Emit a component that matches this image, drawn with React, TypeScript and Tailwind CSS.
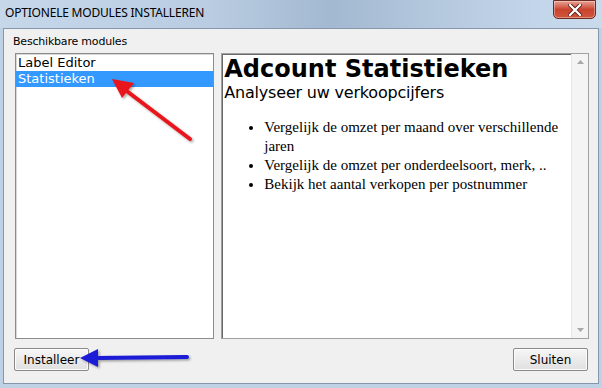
import React from 'react';

const items = ['Label Editor', 'Statistieken'];
const features = [
  'Vergelijk de omzet per maand over verschillende jaren',
  'Vergelijk de omzet per onderdeelsoort, merk, ..',
  'Bekijk het aantal verkopen per postnummer',
];

const CloseButton = () => (
  <div className="w-[43px] h-[19px] rounded-b-[5px] border border-[#6b2a22] bg-gradient-to-b from-[#e8a193] via-[#c9432f] to-[#d0563c] flex items-center justify-center shadow-[inset_0_0_0_1px_rgba(255,255,255,0.35)]">
    <svg width="14" height="12" viewBox="0 0 14 12">
      <path d="M2 1 L12 11 M12 1 L2 11" stroke="#5a1d16" strokeWidth="4" strokeLinecap="square" />
      <path d="M2 1 L12 11 M12 1 L2 11" stroke="#ffffff" strokeWidth="2.2" strokeLinecap="square" />
    </svg>
  </div>
);

const WinButton = ({ label }: { label: string }) => (
  <button className="w-[75px] h-[23px] border border-[#8a8a8a] rounded-[2px] bg-gradient-to-b from-[#f6f6f6] to-[#e0e0e0] text-[12px] text-black font-['DejaVu_Sans',sans-serif] shadow-[inset_0_0_0_1px_#fcfcfc]">
    {label}
  </button>
);

const Arrows = () => (
  <svg className="absolute inset-0 pointer-events-none" width="602" height="388">
    <defs>
      <filter id="sh" x="-20%" y="-20%" width="140%" height="140%">
        <feDropShadow dx="1.5" dy="1.5" stdDeviation="1.2" floodColor="#000" floodOpacity="0.35" />
      </filter>
    </defs>
    <g filter="url(#sh)">
      <line x1="190" y1="139" x2="124" y2="89" stroke="#e8161b" strokeWidth="4" strokeLinecap="round" />
      <polygon points="112,79 134,83 122,98" fill="#e8161b" />
      <line x1="187" y1="357" x2="95" y2="358" stroke="#1a1ad6" strokeWidth="4" strokeLinecap="round" />
      <polygon points="80,358 98,349 98,367" fill="#1a1ad6" />
    </g>
  </svg>
);

export default function App() {
  return (
    <div className="relative w-[602px] h-[388px] bg-[#bfd1e5] flex flex-col overflow-hidden">
      {/* title bar */}
      <div className="h-[28px] shrink-0 flex items-start justify-between bg-[linear-gradient(to_right,#c6d7ea_0%,#b9cce1_35%,#a3b9d1_55%,#b2c6dc_70%,#c4d6ea_90%,#c9daec_100%)]">
        <span className="pl-[5px] pt-[4px] text-[12px] text-black tracking-[-0.2px] font-['Noto_Sans',sans-serif]">
          OPTIONELE MODULES INSTALLEREN
        </span>
        <div className="pr-[6px]">
          <CloseButton />
        </div>
      </div>

      {/* client area */}
      <div className="mx-[3px] mb-[4px] flex-1 bg-[#f0f0f0] border border-[#8696ab] flex flex-col px-[9px] pt-[6px]">
        <div className="text-[11px] leading-[14px] text-black font-['DejaVu_Sans',sans-serif] tracking-[-0.2px]">
          Beschikbare modules
        </div>
        <div className="mt-[4px] flex gap-[7px] h-[286px]">
          {/* list */}
          <div className="ml-[2px] w-[200px] h-full bg-white border border-[#8c8c8c] shadow-[inset_1px_1px_0_#d8d8d8] pt-[1px] font-['DejaVu_Sans',sans-serif] text-[13px] leading-[16px]">
            {items.map((it, i) => (
              <div
                key={it}
                className={i === 1 ? 'bg-[#3399ff] text-white pl-[2px]' : 'text-black pl-[2px]'}
              >
                {it}
              </div>
            ))}
          </div>

          {/* description panel */}
          <div className="w-[369px] h-full flex bg-white border border-[#a0a0a0] shadow-[inset_1px_1px_0_#696969]">
            <div className="flex-1 pl-[2px] pt-[1px]">
              <div className="font-['DejaVu_Sans',sans-serif] font-bold text-[24px] leading-[29px] text-black">
                Adcount Statistieken
              </div>
              <div className="font-['DejaVu_Sans',sans-serif] text-[16px] leading-[17px] text-black tracking-[-0.2px]">
                Analyseer uw verkoopcijfers
              </div>
              <ul className="mt-[17px] pl-[40px] pr-[8px] list-disc font-['Liberation_Serif',serif] text-[15px] leading-[19px] text-black">
                {features.map((f) => (
                  <li key={f}>{f}</li>
                ))}
              </ul>
            </div>
            <div className="w-[17px] h-full bg-[#f4f4f4] border-l border-[#e6e6e6] flex flex-col justify-between items-center py-[6px]">
              <svg width="7" height="4" viewBox="0 0 7 4">
                <polygon points="3.5,0 7,4 0,4" fill="#a8a8a8" />
              </svg>
              <svg width="7" height="4" viewBox="0 0 7 4">
                <polygon points="0,0 7,0 3.5,4" fill="#a8a8a8" />
              </svg>
            </div>
          </div>
        </div>

        <div className="mt-[9px] flex justify-between pl-[1px] pr-[1px]">
          <WinButton label="Installeer" />
          <WinButton label="Sluiten" />
        </div>
      </div>

      <Arrows />
    </div>
  );
}
